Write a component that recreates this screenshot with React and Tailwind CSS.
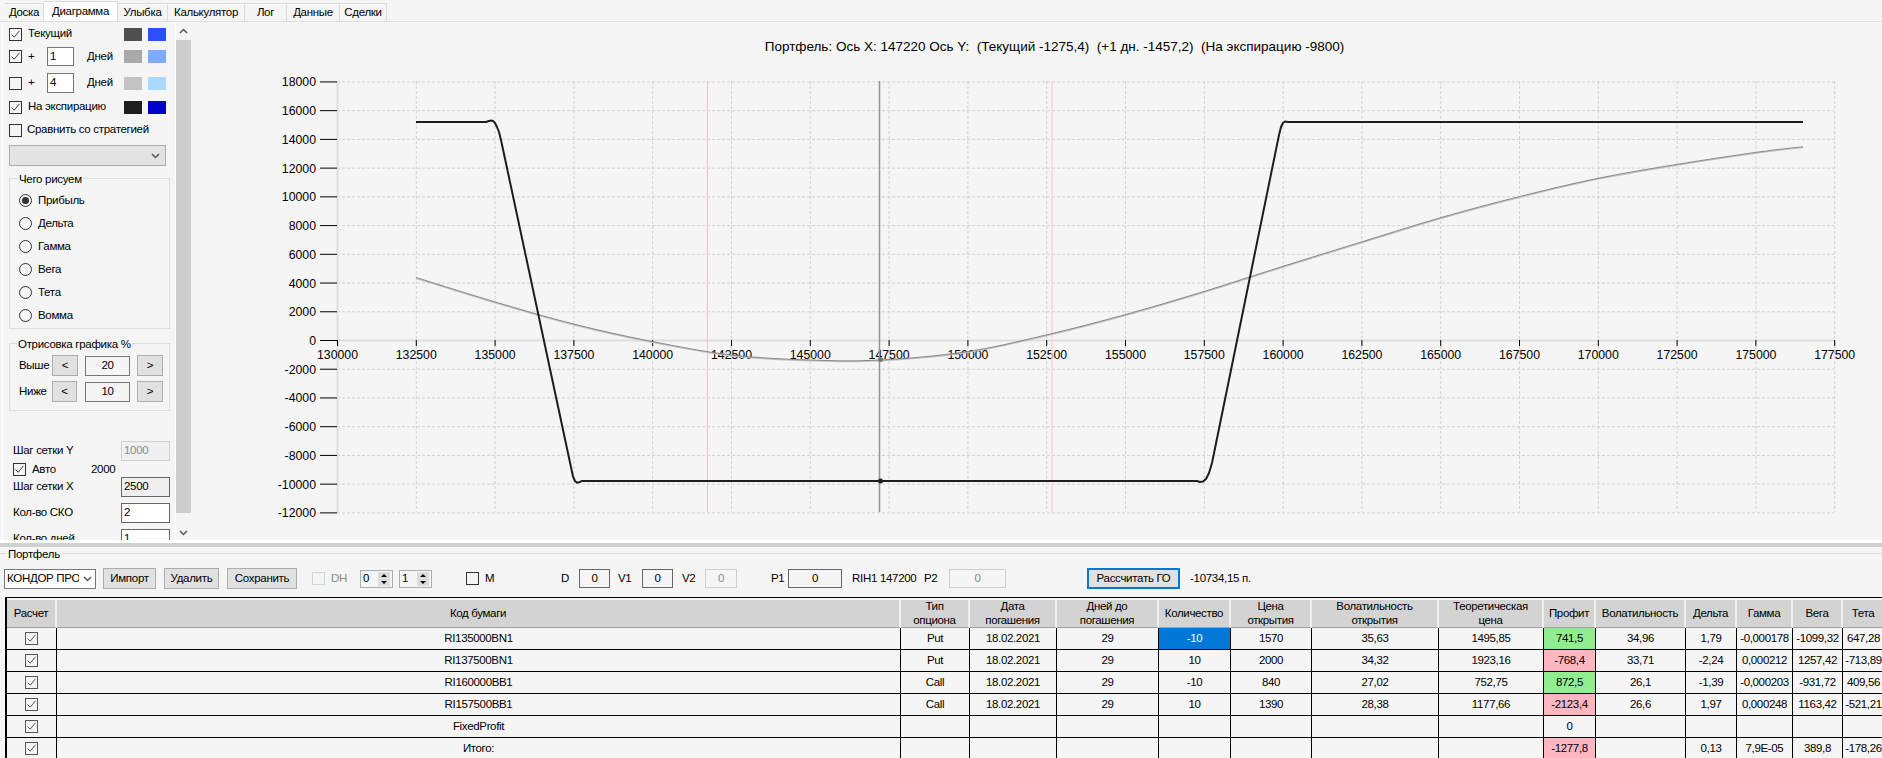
import React from 'react';

const TABS = [
  ['Доска', 'w-[39px]'],
  ['Диаграмма', 'w-[74px]'],
  ['Улыбка', 'w-[50px]'],
  ['Калькулятор', 'w-[77px]'],
  ['Лог', 'w-[42px]'],
  ['Данные', 'w-[53px]'],
  ['Сделки', 'w-[47px]'],
];

const COLUMNS = [
  ['Расчет', 'w-[50px]'],
  ['Код бумаги', 'w-[844px]'],
  [['Тип', 'опциона'], 'w-[69px]'],
  [['Дата', 'погашения'], 'w-[87px]'],
  [['Дней до', 'погашения'], 'w-[102px]'],
  ['Количество', 'w-[72px]'],
  [['Цена', 'открытия'], 'w-[81px]'],
  [['Волатильность', 'открытия'], 'w-[127px]'],
  [['Теоретическая', 'цена'], 'w-[105px]'],
  ['Профит', 'w-[52px]'],
  ['Волатильность', 'w-[90px]'],
  ['Дельта', 'w-[51px]'],
  ['Гамма', 'w-[56px]'],
  ['Вега', 'w-[50px]'],
  ['Тета', 'w-[42px]'],
];

const ROWS = [
  ['RI135000BN1', 'Put', '18.02.2021', '29', '-10', '1570', '35,63', '1495,85', '741,5', '34,96', '1,79', '-0,000178', '-1099,32', '647,28'],
  ['RI137500BN1', 'Put', '18.02.2021', '29', '10', '2000', '34,32', '1923,16', '-768,4', '33,71', '-2,24', '0,000212', '1257,42', '-713,89'],
  ['RI160000BB1', 'Call', '18.02.2021', '29', '-10', '840', '27,02', '752,75', '872,5', '26,1', '-1,39', '-0,000203', '-931,72', '409,56'],
  ['RI157500BB1', 'Call', '18.02.2021', '29', '10', '1390', '28,38', '1177,66', '-2123,4', '26,6', '1,97', '0,000248', '1163,42', '-521,21'],
  ['FixedProfit', '', '', '', '', '', '', '', '0', '', '', '', '', ''],
  ['Итого:', '', '', '', '', '', '', '', '-1277,8', '', '0,13', '7,9E-05', '389,8', '-178,26'],
];

const Y_TICKS = [18000, 16000, 14000, 12000, 10000, 8000, 6000, 4000, 2000, 0, -2000, -4000, -6000, -8000, -10000, -12000];
const X_TICKS = Array.from({ length: 20 }, (_, i) => 130000 + i * 2500);

const yPos = (v) => 340 - (v * 28.73) / 2000;
const xPos = (v) => 337 + ((v - 130000) * 78.8) / 2500;

const GRAY_CURVE = [
  [416, 277.5], [495.3, 302], [573.5, 324], [652, 341.5], [731, 355], [810, 360],
  [880, 360], [967, 351.7], [1046, 335], [1125, 314.7], [1204, 291.5], [1284, 266],
  [1362.4, 241.7], [1440.6, 217.7], [1519, 196.7], [1598, 178.3], [1677.6, 164.3], [1756.6, 152.3], [1803, 146.7],
];

const EXPIRY = '416,122 486,122 489,121 491,120.5 493,121 495,123 497,127 499,132 501,140 573,476.5 575,481 577,482.7 579,482.3 582,481 1197,481 1200,482 1203,481.5 1206,479 1209,473 1212,463 1279,135 1281,127 1283,123 1285,121.5 1288,122 1803,122';

// catmull-rom through the measured points
function smooth(pts) {
  let d = `M${pts[0][0]} ${pts[0][1]}`;
  for (let i = 0; i < pts.length - 1; i++) {
    const p0 = pts[i - 1] || pts[i];
    const p1 = pts[i];
    const p2 = pts[i + 1];
    const p3 = pts[i + 2] || p2;
    const c1x = p1[0] + (p2[0] - p0[0]) / 6;
    const c1y = p1[1] + (p2[1] - p0[1]) / 6;
    const c2x = p2[0] - (p3[0] - p1[0]) / 6;
    const c2y = p2[1] - (p3[1] - p1[1]) / 6;
    d += ` C${c1x} ${c1y} ${c2x} ${c2y} ${p2[0]} ${p2[1]}`;
  }
  return d;
}

function Check({ light }) {
  return (
    <svg width="11" height="11" viewBox="0 0 11 11" className="block">
      <path d="M1.5 5.5 L4.2 8.2 L9.5 1.8" fill="none" stroke={light ? '#555' : '#444'} strokeWidth="1" />
    </svg>
  );
}

function CheckBox({ checked, muted }) {
  const border = muted ? 'border-[#555]' : 'border-[#333]';
  return (
    <span className={`flex h-[13px] w-[13px] shrink-0 items-center justify-center border ${border}`}>
      {checked && <Check light={muted} />}
    </span>
  );
}

function Radio({ checked, label }) {
  return (
    <div className="flex h-[23px] items-center">
      <span className="flex h-[13px] w-[13px] shrink-0 items-center justify-center rounded-full border border-[#333]">
        {checked && <span className="h-[7px] w-[7px] rounded-full bg-[#333]" />}
      </span>
      <span className="ml-[6px]">{label}</span>
    </div>
  );
}

function Swatches({ a, b }) {
  return (
    <div className="ml-auto flex gap-[6px]">
      <span className={`h-[13px] w-[18px] ${a}`} />
      <span className={`h-[13px] w-[18px] ${b}`} />
    </div>
  );
}

function Chevron({ down }) {
  return (
    <svg width="9" height="6" viewBox="0 0 9 6" className="block">
      <path d={down ? 'M1 1 L4.5 4.5 L8 1' : 'M1 5 L4.5 1.5 L8 5'} fill="none" stroke="#555" strokeWidth="1.5" />
    </svg>
  );
}

function SmallButton({ label, width }) {
  return (
    <span className={`flex h-[21px] shrink-0 items-center justify-center border border-[#adadad] bg-[#e1e1e1] ${width}`}>{label}</span>
  );
}

function LeftPanel() {
  return (
    <div className="ml-[2px] h-[518px] w-[174px] shrink-0 overflow-hidden border-x border-white pl-[6px]">
      <div className="mt-[2px] flex h-[20px] w-[157px] items-center">
        <CheckBox checked />
        <span className="ml-[6px]">Текущий</span>
        <Swatches a="bg-[#505050]" b="bg-[#2b4fff]" />
      </div>
      <div className="mt-[3px] flex h-[19px] w-[157px] items-center">
        <CheckBox checked />
        <span className="ml-[6px] w-[19px]">+</span>
        <span className="flex h-[19px] w-[27px] items-center border border-[#777] bg-white pl-[2px]">1</span>
        <span className="ml-[13px]">Дней</span>
        <Swatches a="bg-[#a9a9a9]" b="bg-[#7eabff]" />
      </div>
      <div className="mt-[7px] flex h-[20px] w-[157px] items-center">
        <CheckBox />
        <span className="ml-[6px] w-[19px]">+</span>
        <span className="flex h-[20px] w-[27px] items-center border border-[#777] bg-white pl-[2px]">4</span>
        <span className="ml-[13px]">Дней</span>
        <Swatches a="bg-[#c3c3c3]" b="bg-[#a9d9ff]" />
      </div>
      <div className="mt-[4px] flex h-[20px] w-[157px] items-center">
        <CheckBox checked />
        <span className="ml-[6px]">На экспирацию</span>
        <Swatches a="bg-[#1e1e1e]" b="bg-[#0000c8]" />
      </div>
      <div className="mt-[3px] flex h-[20px] items-center">
        <CheckBox />
        <span className="ml-[5px]">Сравнить со стратегией</span>
      </div>
      <div className="mt-[5px] flex h-[21px] w-[157px] items-center justify-end border border-[#adadad] bg-[#e3e3e3] pr-[5px]">
        <Chevron down />
      </div>

      <div className="relative mt-[12px] h-[151px] w-[161px] border border-[#dcdcdc] pl-[9px] pt-[10px]">
        <span className="absolute -top-[8px] left-[8px] bg-[#f5f5f5] px-[1px]">Чего рисуем</span>
        <Radio checked label="Прибыль" />
        <Radio label="Дельта" />
        <Radio label="Гамма" />
        <Radio label="Вега" />
        <Radio label="Тета" />
        <Radio label="Вомма" />
      </div>

      <div className="relative mt-[14px] h-[68px] w-[161px] border border-[#dcdcdc] pl-[9px] pt-[11px]">
        <span className="absolute -top-[8px] left-[7px] bg-[#f5f5f5] px-[1px]">Отрисовка графика %</span>
        <div className="flex h-[21px] items-center">
          <span className="w-[33px]">Выше</span>
          <SmallButton label="<" width="w-[26px]" />
          <span className="ml-[7px] flex h-[20px] w-[45px] items-center justify-center border border-[#777]">20</span>
          <span className="ml-[7px]"><SmallButton label=">" width="w-[26px]" /></span>
        </div>
        <div className="mt-[5px] flex h-[21px] items-center">
          <span className="w-[33px]">Ниже</span>
          <SmallButton label="<" width="w-[25px]" />
          <span className="ml-[8px] flex h-[20px] w-[45px] items-center justify-center border border-[#777]">10</span>
          <span className="ml-[7px]"><SmallButton label=">" width="w-[26px]" /></span>
        </div>
      </div>

      <div className="mt-[30px] flex h-[20px] w-[161px] items-center pl-[4px]">
        <span>Шаг сетки Y</span>
        <span className="ml-auto flex h-[20px] w-[49px] items-center border border-[#cfcfcf] bg-[#f0f0f0] pl-[2px] text-[#8a8a8a]">1000</span>
      </div>
      <div className="mt-[1px] flex h-[15px] items-center pl-[4px]">
        <CheckBox checked />
        <span className="ml-[6px] w-[59px]">Авто</span>
        <span>2000</span>
      </div>
      <div className="flex h-[20px] w-[161px] items-center pl-[4px]">
        <span>Шаг сетки X</span>
        <span className="ml-auto flex h-[20px] w-[49px] items-center border border-[#666] bg-[#f0f0f0] pl-[2px]">2500</span>
      </div>
      <div className="mt-[6px] flex h-[20px] w-[161px] items-center pl-[4px]">
        <span>Кол-во СКО</span>
        <span className="ml-auto flex h-[20px] w-[49px] items-center border border-[#666] bg-white pl-[2px]">2</span>
      </div>
      <div className="mt-[6px] flex h-[20px] w-[161px] items-center pl-[4px]">
        <span>Кол-во дней</span>
        <span className="ml-auto flex h-[20px] w-[49px] items-center border border-[#666] bg-white pl-[2px]">1</span>
      </div>
    </div>
  );
}

function ScrollBar() {
  return (
    <div className="flex h-[518px] w-[15px] shrink-0 flex-col">
      <div className="flex h-[18px] items-center justify-center"><Chevron /></div>
      <div className="h-[473px] bg-[#cdcdcd]" />
      <div className="flex h-[27px] items-start justify-center pt-[17px]"><Chevron down /></div>
    </div>
  );
}

function Chart() {
  return (
    <svg width="1691" height="518" viewBox="191 22 1691 518" className="block shrink-0 tracking-normal">
      <text x="1054.5" y="51" textAnchor="middle" fontSize="13.5" fill="#000" xmlSpace="preserve">
        {'Портфель: Ось Х: 147220 Ось Y:  (Текущий -1275,4)  (+1 дн. -1457,2)  (На экспирацию -9800)'}
      </text>

      {Y_TICKS.filter((v) => v !== 0).map((v) => (
        <line key={v} x1="337" x2="1834" y1={yPos(v) + 0.5} y2={yPos(v) + 0.5} stroke="#d2d2d2" strokeDasharray="3 2" />
      ))}
      {X_TICKS.slice(1).map((v) => (
        <line key={v} x1={xPos(v) + 0.5} x2={xPos(v) + 0.5} y1="81" y2="512" stroke="#d2d2d2" strokeDasharray="3 2" />
      ))}

      <line x1="337.5" x2="337.5" y1="81" y2="512" stroke="#dedede" strokeWidth="2" />
      <line x1="337" x2="1834" y1="340.5" y2="340.5" stroke="#dedede" strokeWidth="2" />

      {Y_TICKS.map((v) => (
        <g key={v}>
          <line x1="320" x2="337" y1={yPos(v) + 0.5} y2={yPos(v) + 0.5} stroke="#000" />
          <text x="316" y={yPos(v) + 5} textAnchor="end" fontSize="12.3" fill="#000">{v}</text>
        </g>
      ))}
      {X_TICKS.map((v) => (
        <g key={v}>
          <line x1={xPos(v) + 0.5} x2={xPos(v) + 0.5} y1="340" y2="346" stroke="#000" />
          <text x={xPos(v) + 0.5} y="358.5" textAnchor="middle" fontSize="12.3" fill="#000">{v}</text>
        </g>
      ))}

      <line x1="707.5" x2="707.5" y1="81" y2="512" stroke="#f3c3cb" />
      <line x1="1052" x2="1052" y1="81" y2="512" stroke="#ffd3da" strokeWidth="1.5" />
      <line x1="879.5" x2="879.5" y1="81" y2="512" stroke="#8b97a5" strokeWidth="1.5" />

      <path d={smooth(GRAY_CURVE)} fill="none" stroke="#c2c2c2" strokeWidth="1.2" transform="translate(0 0.9)" />
      <path d={smooth(GRAY_CURVE)} fill="none" stroke="#7c7c7c" strokeWidth="0.9" />
      <polyline points={EXPIRY} fill="none" stroke="#1e1e1e" strokeWidth="2" strokeLinejoin="round" />

      <circle cx="880.5" cy="359.5" r="2.5" fill="#777" />
      <circle cx="880.5" cy="481" r="2.5" fill="#1e1e1e" />
    </svg>
  );
}

function Box({ value, width, disabled }) {
  const tone = disabled ? 'border-[#cfcfcf] text-[#8a8a8a]' : 'border-[#666]';
  return <span className={`flex h-[19px] shrink-0 items-center justify-center border ${tone} ${width}`}>{value}</span>;
}

function Spinner({ value, className }) {
  return (
    <span className={`flex h-[18px] w-[33px] shrink-0 items-center border border-[#adadad] pl-[2px] ${className}`}>
      <span className="w-[15px]">{value}</span>
      <span className="flex h-[14px] w-[12px] flex-col items-center justify-around bg-[#dcdcdc]">
        <span className="h-0 w-0 border-x-[3px] border-b-[3px] border-x-transparent border-b-black" />
        <span className="h-0 w-0 border-x-[3px] border-t-[3px] border-x-transparent border-t-black" />
      </span>
    </span>
  );
}

function ToolButton({ label, className }) {
  return (
    <span className={`flex h-[21px] shrink-0 items-center justify-center border border-[#adadad] bg-[#e1e1e1] ${className}`}>{label}</span>
  );
}

function Toolbar() {
  return (
    <div className="mt-[9px] flex h-[21px] items-center pl-[4px]">
      <span className="flex h-[20px] w-[92px] shrink-0 items-center overflow-hidden border border-[#777] bg-white pl-[2px]">
        <span className="w-[72px] overflow-hidden whitespace-nowrap">КОНДОР ПРОДАЖА</span>
        <span className="ml-[4px]"><Chevron down /></span>
      </span>
      <ToolButton label="Импорт" className="ml-[7px] w-[53px]" />
      <ToolButton label="Удалить" className="ml-[8px] w-[55px]" />
      <ToolButton label="Сохранить" className="ml-[8px] w-[70px]" />
      <span className="ml-[15px] h-[13px] w-[13px] shrink-0 border border-[#d4d4d4]" />
      <span className="ml-[6px] w-[29px] text-[#8a8a8a]">DH</span>
      <Spinner value="0" />
      <Spinner value="1" className="ml-[6px]" />
      <span className="ml-[34px] h-[13px] w-[13px] shrink-0 border border-[#333]" />
      <span className="ml-[6px] w-[76px]">M</span>
      <span className="w-[18px]">D</span>
      <Box value="0" width="w-[31px]" />
      <span className="ml-[8px] w-[24px]">V1</span>
      <Box value="0" width="w-[31px]" />
      <span className="ml-[9px] w-[23px]">V2</span>
      <Box value="0" width="w-[32px]" disabled />
      <span className="ml-[34px] w-[17px]">P1</span>
      <Box value="0" width="w-[54px]" />
      <span className="ml-[10px] w-[72px] whitespace-nowrap">RIH1 147200</span>
      <span className="w-[25px]">P2</span>
      <Box value="0" width="w-[57px]" disabled />
      <span className="ml-[81px] flex h-[21px] w-[93px] shrink-0 items-center justify-center border-2 border-[#0078d7] bg-[#e1e1e1]">Рассчитать ГО</span>
      <span className="ml-[10px] whitespace-nowrap">-10734,15 п.</span>
    </div>
  );
}

function HeaderLabel({ label }) {
  if (Array.isArray(label)) {
    return (
      <span className="block leading-[13.5px]">
        {label[0]}<br />{label[1]}
      </span>
    );
  }
  return label;
}

function profitTone(v) {
  if (v === '0') return '';
  return v.startsWith('-') ? 'bg-[#ffb6c1]' : 'bg-[#90ee90]';
}

function PositionsTable() {
  return (
    <div className="ml-[5px] mt-[8px] w-[1877px] overflow-hidden border-l-[2px] border-t border-black pt-[2px]">
      <table className="w-[1878px] table-fixed border-separate border-spacing-0 text-center tracking-[-0.35px]">
        <colgroup>
          {COLUMNS.map(([, w], i) => <col key={i} className={w} />)}
        </colgroup>
        <thead>
          <tr className="h-[28px]">
            {COLUMNS.map(([label], i) => (
              <th key={i} className="border-b border-r-2 border-b-[#a0a0a0] border-r-[#f0f0f0] bg-[#d3d3d3] p-0 font-normal">
                <HeaderLabel label={label} />
              </th>
            ))}
          </tr>
        </thead>
        <tbody>
          {ROWS.map((row) => (
            <tr key={row[0]} className="h-[22px]">
              <td className="border-b border-r border-black p-0">
                <span className="flex justify-center"><CheckBox checked muted /></span>
              </td>
              {row.map((cell, i) => {
                let tone = '';
                if (row[0] === 'RI135000BN1' && i === 4) tone = 'bg-[#0078d7] text-white';
                if (i === 8) tone = profitTone(cell);
                return (
                  <td key={i} className={`whitespace-nowrap border-b border-r border-black p-0 ${tone}`}>{cell}</td>
                );
              })}
            </tr>
          ))}
        </tbody>
      </table>
    </div>
  );
}

export default function App() {
  return (
    <div className="h-[758px] w-[1882px] overflow-hidden bg-[#f5f5f5] font-['Liberation_Sans',Arial,sans-serif] text-[11.5px] tracking-[-0.3px] text-black">
      <div className="flex h-[22px] items-end border-b border-[#dcdcdc] pl-[5px]">
        {TABS.map(([label, w], i) => (
          <span
            key={label}
            className={`flex shrink-0 items-center justify-center border-r border-t border-[#dcdcdc] ${w} ${i === 1 ? 'h-[20px] bg-white' : 'h-[18px]'}`}
          >
            {label}
          </span>
        ))}
      </div>
      <div className="flex h-[518px]">
        <LeftPanel />
        <ScrollBar />
        <Chart />
      </div>
      <div className="h-[3px] bg-white" />
      <div className="h-[4px] bg-[#d0d0d0]" />
      <div className="flex h-[12px] items-center">
        <span className="h-px w-[6px] bg-[#dcdcdc]" />
        <span className="px-[2px] pt-[3px]">Портфель</span>
        <span className="h-px flex-1 bg-[#dcdcdc]" />
      </div>
      <Toolbar />
      <PositionsTable />
    </div>
  );
}
